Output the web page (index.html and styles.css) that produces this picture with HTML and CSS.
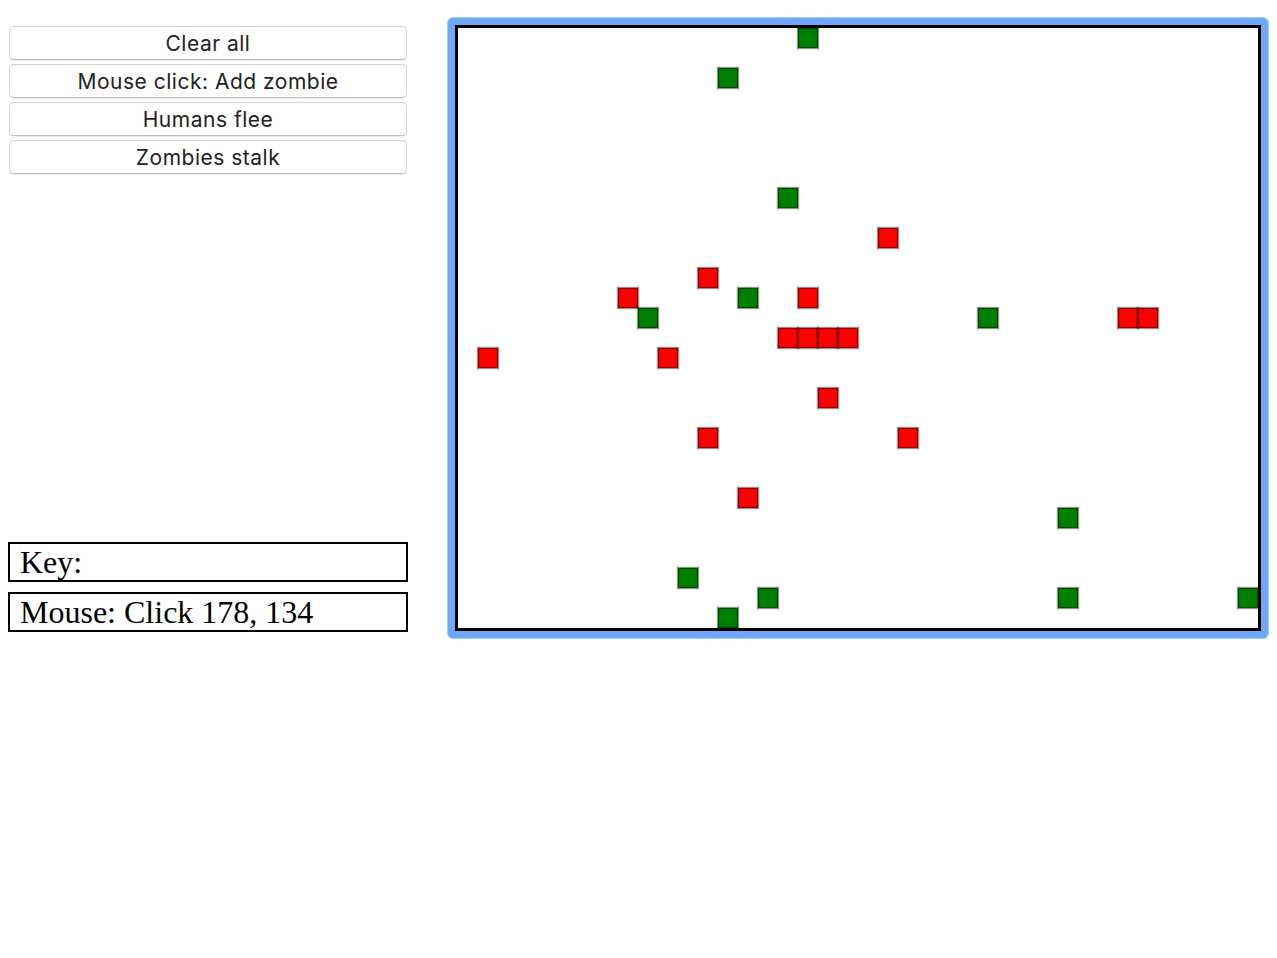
FILE: index.html
```html
<!DOCTYPE html>
<html>
<head>
<meta charset="utf-8">
<link rel="stylesheet" href="styles.css">
</head>
<body>
<div class="page">
  <div class="side">
    <div class="buttons">
      <button class="btn">Clear all</button>
      <button class="btn">Mouse click: Add zombie</button>
      <button class="btn">Humans flee</button>
      <button class="btn">Zombies stalk</button>
    </div>
    <div class="info">
      <div class="box">Key:</div>
      <div class="box">Mouse: Click 178, 134</div>
    </div>
  </div>
  <div class="ring">
    <div class="frame">
      <svg class="board" width="800" height="600" viewBox="0 0 800 600">
        <g class="z" fill="#008000" stroke="rgba(0,0,0,0.42)" stroke-width="2.4">
          <rect x="340" y="0" width="20" height="20"/>
          <rect x="260" y="40" width="20" height="20"/>
          <rect x="320" y="160" width="20" height="20"/>
          <rect x="280" y="260" width="20" height="20"/>
          <rect x="180" y="280" width="20" height="20"/>
          <rect x="520" y="280" width="20" height="20"/>
          <rect x="600" y="480" width="20" height="20"/>
          <rect x="220" y="540" width="20" height="20"/>
          <rect x="300" y="560" width="20" height="20"/>
          <rect x="600" y="560" width="20" height="20"/>
          <rect x="780" y="560" width="20" height="20"/>
          <rect x="260" y="580" width="20" height="20"/>
        </g>
        <g class="h" fill="#ff0000" stroke="rgba(0,0,0,0.42)" stroke-width="2.4">
          <rect x="420" y="200" width="20" height="20"/>
          <rect x="240" y="240" width="20" height="20"/>
          <rect x="160" y="260" width="20" height="20"/>
          <rect x="340" y="260" width="20" height="20"/>
          <rect x="320" y="300" width="20" height="20"/>
          <rect x="340" y="300" width="20" height="20"/>
          <rect x="360" y="300" width="20" height="20"/>
          <rect x="380" y="300" width="20" height="20"/>
          <rect x="660" y="280" width="20" height="20"/>
          <rect x="680" y="280" width="20" height="20"/>
          <rect x="20" y="320" width="20" height="20"/>
          <rect x="200" y="320" width="20" height="20"/>
          <rect x="360" y="360" width="20" height="20"/>
          <rect x="240" y="400" width="20" height="20"/>
          <rect x="440" y="400" width="20" height="20"/>
          <rect x="280" y="460" width="20" height="20"/>
        </g>
      </svg>
    </div>
  </div>
</div>
</body>
</html>
```

FILE: styles.css
```css
html, body {
  margin: 0;
  padding: 0;
  background: #ffffff;
}
body {
  padding: 8px;
}
.page {
  display: flex;
  align-items: flex-start;
  gap: 39px;
}
.side {
  width: 400px;
  display: flex;
  flex-direction: column;
}
.buttons {
  display: flex;
  flex-direction: column;
  gap: 4px;
  padding: 18px 1px 0 1px;
}
.btn {
  height: 34px;
  margin: 0;
  padding: 2px 0 0 0;
  background: #ffffff;
  border: 1px solid #d2d2d2;
  border-bottom-color: #bdbdbd;
  border-radius: 5px;
  box-shadow: 0 1px 1px rgba(0,0,0,0.08);
  font-family: "Inter", "Open Sans", sans-serif;
  font-size: 21px;
  letter-spacing: 0.5px;
  color: #222222;
  line-height: 30px;
  text-align: center;
}
.info {
  margin-top: 368px;
  display: flex;
  flex-direction: column;
  gap: 10px;
}
.box {
  height: 36px;
  border: 2px solid #000000;
  padding: 0 10px;
  font-family: "Liberation Serif", "Times New Roman", serif;
  font-size: 32px;
  line-height: 36px;
  color: #000000;
  white-space: nowrap;
}
.ring {
  margin-top: 9px;
  padding: 7px;
  background: #6fa7f8;
  border: 1px solid #a7c9fb;
  border-radius: 6px;
}
.frame {
  border: 3px solid #000000;
  background: #ffffff;
  line-height: 0;
}
.board {
  display: block;
  overflow: hidden;
}
```
